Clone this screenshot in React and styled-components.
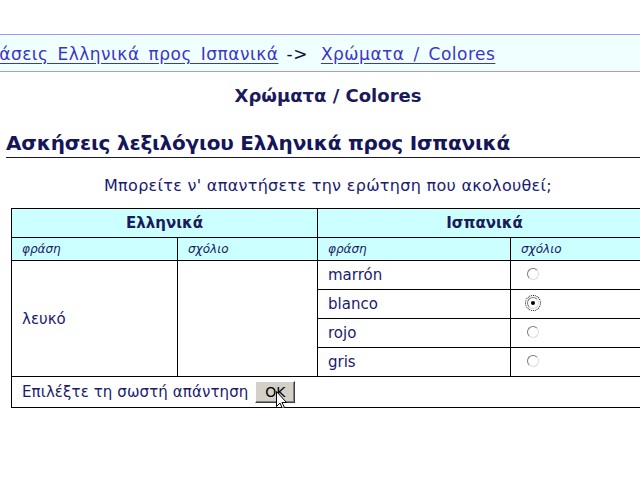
import React from "react";
import styled, { createGlobalStyle } from "styled-components";

const Global = createGlobalStyle`
  html, body { margin: 0; padding: 0; background: #ffffff; overflow: hidden; }
  body { font-family: "DejaVu Sans", Verdana, sans-serif; color: #1a1a66; }
`;

const Page = styled.div`
  width: 660px;
  padding-top: 34px;
`;

const Breadcrumb = styled.div`
  width: 640px;
  height: 38px;
  box-sizing: border-box;
  border-top: 1px solid #9999ff;
  border-bottom: 1px solid #9999ff;
  background: #f0ffff;
  display: flex;
  align-items: center;
  white-space: nowrap;
  overflow: hidden;
  font-size: 17px;
  letter-spacing: 0.5px;
  word-spacing: 3px;
`;

const Crumbs = styled.div`
  text-indent: -26px;
  padding-top: 2px;
`;

const Link = styled.a`
  color: #3b35c8;
  text-decoration: underline;
  text-underline-offset: 3px;
`;

const Arrow = styled.span`
  color: #101040;
  margin: 0 13px 0 8px;
`;

const Content = styled.div`
  width: 644px;
  margin-left: 6px;
`;

const Title = styled.div`
  text-align: center;
  font-weight: bold;
  font-size: 18px;
  color: #1a1a5c;
  margin-top: 13px;
  line-height: 22px;
`;

const Heading = styled.h2`
  margin: 24px 0 0 0;
  font-size: 20px;
  line-height: 24px;
  letter-spacing: -0.2px;
  font-weight: bold;
  color: #15155a;
  border-bottom: 1px solid #15155a;
  padding-bottom: 2px;
`;

const Intro = styled.p`
  margin: 18px 0 0 0;
  text-align: center;
  font-size: 16px;
  letter-spacing: 0.3px;
  line-height: 20px;
  color: #1a1a70;
`;

const Table = styled.table`
  margin: 12px 0 0 5px;
  border-collapse: collapse;
  table-layout: fixed;
  width: 640px;
`;

const Th = styled.th`
  background: #ccffff;
  border: 1px solid #000;
  height: 28px;
  padding: 0;
  font-size: 15px;
  font-weight: bold;
  color: #1a1a5c;
  text-align: center;
`;

const SubTh = styled.td`
  background: #ccffff;
  border: 1px solid #000;
  height: 22px;
  padding: 0 0 0 10px;
  font-size: 12px;
  font-style: italic;
  color: #1a1a66;
`;

const Td = styled.td`
  border: 1px solid #000;
  height: 28px;
  padding: 0 0 0 10px;
  font-size: 15px;
  color: #1a1a70;
  vertical-align: middle;
`;

const RadioCell = styled.td`
  border: 1px solid #000;
  height: 28px;
  padding: 0 0 0 16px;
  vertical-align: middle;
`;

const Radio = styled.span`
  display: inline-block;
  position: relative;
  width: 12px;
  height: 12px;
  box-sizing: border-box;
  border-radius: 50%;
  border: 1px solid;
  border-color: #7a7a7a #dcdcdc #dcdcdc #7a7a7a;
  background: #fff;
  vertical-align: middle;
  margin-top: -4px;
  outline: ${(p) => (p.$focus ? "1px dotted #000" : "none")};
  outline-offset: 1px;
  &::after {
    content: "";
    display: ${(p) => (p.$checked ? "block" : "none")};
    position: absolute;
    left: 3px;
    top: 3px;
    width: 4px;
    height: 4px;
    border-radius: 50%;
    background: #000;
  }
`;

const FooterCell = styled.td`
  border: 1px solid #000;
  height: 30px;
  padding: 0 0 0 10px;
  font-size: 15px;
  letter-spacing: 0.1px;
  color: #1a1a70;
  vertical-align: middle;
`;

const Button = styled.span`
  position: relative;
  display: inline-block;
  width: 40px;
  height: 22px;
  box-sizing: border-box;
  margin-left: 7px;
  background: #d4d0c8;
  border: 1px solid;
  border-color: #ffffff #404040 #404040 #ffffff;
  box-shadow: inset -1px -1px 0 #808080;
  font-size: 14px;
  letter-spacing: 0;
  color: #000;
  text-align: center;
  line-height: 20px;
  vertical-align: middle;
`;

const Cursor = styled.svg`
  position: absolute;
  left: 20px;
  top: 9px;
`;

const Spanish = ["marrón", "blanco", "rojo", "gris"];

export default function App() {
  return (
    <>
      <Global />
      <Page>
        <Breadcrumb>
          <Crumbs>
            <Link>Φράσεις Ελληνικά προς Ισπανικά</Link>
            <Arrow>-&gt;</Arrow>
            <Link>Χρώματα / Colores</Link>
          </Crumbs>
        </Breadcrumb>
        <Content>
          <Title>Χρώματα / Colores</Title>
          <Heading>Ασκήσεις λεξιλόγιου Ελληνικά προς Ισπανικά</Heading>
          <Intro>Μπορείτε ν' απαντήσετε την ερώτηση που ακολουθεί;</Intro>
          <Table>
            <colgroup>
              <col style={{ width: 166 }} />
              <col style={{ width: 140 }} />
              <col style={{ width: 193 }} />
              <col style={{ width: 141 }} />
            </colgroup>
            <thead>
              <tr>
                <Th colSpan={2}>Ελληνικά</Th>
                <Th colSpan={2}>Ισπανικά</Th>
              </tr>
              <tr>
                <SubTh>φράση</SubTh>
                <SubTh>σχόλιο</SubTh>
                <SubTh>φράση</SubTh>
                <SubTh>σχόλιο</SubTh>
              </tr>
            </thead>
            <tbody>
              {Spanish.map((w, i) => (
                <tr key={w}>
                  {i === 0 && <Td rowSpan={4}>λευκό</Td>}
                  {i === 0 && <Td rowSpan={4}></Td>}
                  <Td>{w}</Td>
                  <RadioCell>
                    <Radio $checked={i === 1} $focus={i === 1} />
                  </RadioCell>
                </tr>
              ))}
              <tr>
                <FooterCell colSpan={4}>
                  Επιλέξτε τη σωστή απάντηση
                  <Button>
                    OK
                    <Cursor width="12" height="19" viewBox="0 0 12 19">
                      <path
                        d="M0.5 0.5 L0.5 15.5 L4 12 L6.5 17.5 L8.5 16.5 L6 11.5 L10.5 11.5 Z"
                        fill="#fff"
                        stroke="#000"
                        strokeWidth="1"
                      />
                    </Cursor>
                  </Button>
                </FooterCell>
              </tr>
            </tbody>
          </Table>
        </Content>
      </Page>
    </>
  );
}
